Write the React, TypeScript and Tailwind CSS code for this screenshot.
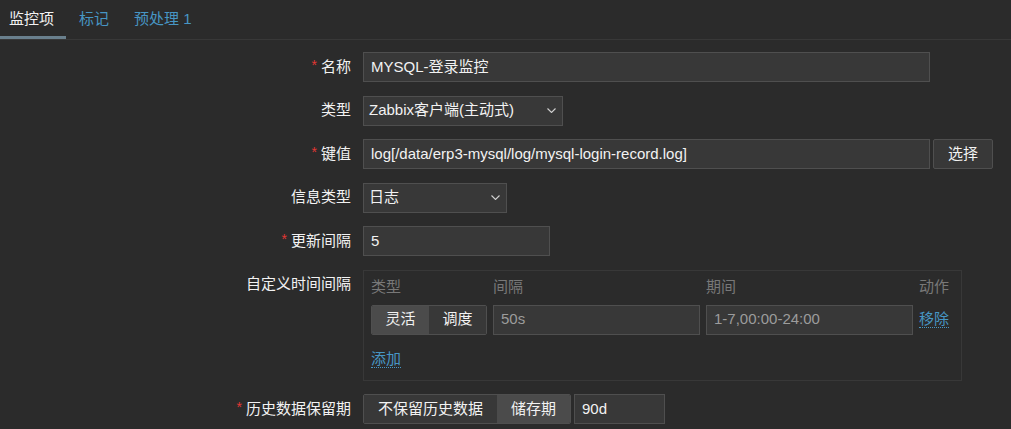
import React from "react";

const FONT = { fontFamily: '"Liberation Sans", "Noto Sans CJK SC", sans-serif' };

function Chevron() {
  return (
    <svg width="9" height="5" viewBox="0 0 9 5" className="shrink-0">
      <path d="M0.5 0.5 L4.5 4.5 L8.5 0.5" fill="none" stroke="#d0d0d0" strokeWidth="1.1" />
    </svg>
  );
}

function Label({ text, required }: { text: string; required?: boolean }) {
  return (
    <div className="w-[351px] h-[30px] flex items-center justify-end shrink-0 text-[#f2f2f2]">
      {required && <span className="text-[#e33734] text-[14px] mr-[4px] -mt-[4px]">*</span>}
      {text}
    </div>
  );
}

function Row({ label, required, children, top }: { label: string; required?: boolean; children: React.ReactNode; top?: boolean }) {
  return (
    <div className={`flex gap-[12px] ${top ? "items-start" : "items-center"}`}>
      <Label text={label} required={required} />
      {children}
    </div>
  );
}

function Input({ value, w, muted }: { value: string; w: string; muted?: boolean }) {
  return (
    <div className={`${w} h-[30px] bg-[#383838] border border-[#4f4f4f] flex items-center px-[7px] ${muted ? "text-[#9c9c9c]" : "text-[#f2f2f2]"}`}>
      {value}
    </div>
  );
}

function Select({ value, w }: { value: string; w: string }) {
  return (
    <div className={`${w} h-[30px] bg-[#383838] border border-[#4f4f4f] flex items-center justify-between pl-[5px] pr-[6px] text-[#f2f2f2]`}>
      <span>{value}</span>
      <Chevron />
    </div>
  );
}

export default function App() {
  return (
    <div className="min-h-screen bg-[#2b2b2b] text-[15px]" style={FONT}>
      {/* Tabs */}
      <div className="h-[40px] border-b border-[#383838] flex">
        <div className="relative pl-[9px] pr-[12px] flex items-center h-[39px] text-[#f2f2f2]">
          监控项
          <span className="absolute left-0 right-0 bottom-[0px] h-[3px] bg-[#6a808d]" />
        </div>
        <div className="pl-[13px] pr-[12px] flex items-center h-[39px] text-[#4796c4]">标记</div>
        <div className="pl-[13px] pr-[12px] flex items-center h-[39px] text-[#4796c4]">预处理 1</div>
      </div>

      {/* Form */}
      <div className="pt-[12px] flex flex-col gap-[13.5px]">
        <Row label="名称" required>
          <Input value="MYSQL-登录监控" w="w-[567px]" />
        </Row>
        <Row label="类型">
          <Select value="Zabbix客户端(主动式)" w="w-[200px]" />
        </Row>
        <Row label="键值" required>
          <div className="flex gap-[3px]">
            <Input value="log[/data/erp3-mysql/log/mysql-login-record.log]" w="w-[567px]" />
            <div className="w-[60px] h-[30px] bg-[#383838] border border-[#4f4f4f] rounded-[2px] flex items-center justify-center text-[#f2f2f2]">
              选择
            </div>
          </div>
        </Row>
        <Row label="信息类型">
          <Select value="日志" w="w-[144px]" />
        </Row>
        <Row label="更新间隔" required>
          <Input value="5" w="w-[187px]" />
        </Row>
        <Row label="自定义时间间隔" top>
          <div className="w-[599px] h-[111px] border border-[#383838] px-[7px] pt-[8px]">
            <div className="grid grid-cols-[116px_207px_207px_auto] gap-x-[6px] text-[#787878]">
              <div className="h-[18px] flex items-center">类型</div>
              <div className="h-[18px] flex items-center">间隔</div>
              <div className="h-[18px] flex items-center">期间</div>
              <div className="h-[18px] flex items-center">动作</div>
            </div>
            <div className="grid grid-cols-[116px_207px_207px_auto] gap-x-[6px] mt-[8px] items-center">
              <div className="h-[30px] flex border border-[#4f4f4f] rounded-[2px] overflow-hidden text-[#f2f2f2]">
                <div className="flex-1 bg-[#4b4b4b] flex items-center justify-center">灵活</div>
                <div className="flex-1 bg-[#383838] flex items-center justify-center">调度</div>
              </div>
              <Input value="50s" w="w-[207px]" muted />
              <Input value="1-7,00:00-24:00" w="w-[207px]" muted />
              <div>
                <span className="text-[#4796c4] border-b border-dotted border-[#4796c4] leading-[18px]">移除</span>
              </div>
            </div>
            <div className="mt-[13px]">
              <span className="text-[#4796c4] border-b border-dotted border-[#4796c4] leading-[18px]">添加</span>
            </div>
          </div>
        </Row>
        <Row label="历史数据保留期" required>
          <div className="flex gap-[3px]">
            <div className="w-[208px] h-[30px] flex border border-[#4f4f4f] rounded-[2px] overflow-hidden text-[#f2f2f2]">
              <div className="w-[133px] bg-[#383838] flex items-center justify-center">不保留历史数据</div>
              <div className="flex-1 bg-[#4b4b4b] flex items-center justify-center">储存期</div>
            </div>
            <Input value="90d" w="w-[91px]" />
          </div>
        </Row>
      </div>
    </div>
  );
}
